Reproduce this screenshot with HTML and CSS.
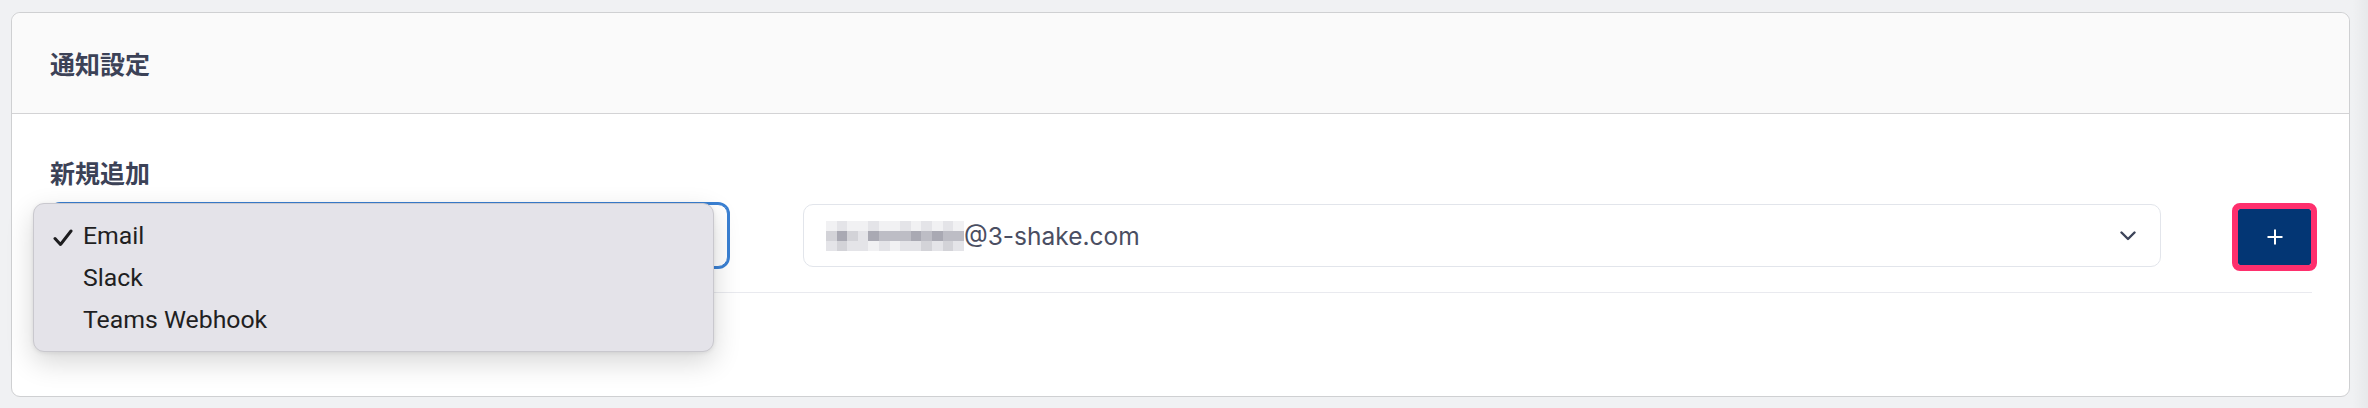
FILE: index.html
```html
<!DOCTYPE html>
<html lang="ja">
<head>
<meta charset="utf-8">
<title>通知設定</title>
<link rel="stylesheet" href="styles.css">
</head>
<body>
<div class="page">
  <section class="card">
    <header class="card-header">
      <h2 class="card-title">通知設定</h2>
    </header>
    <div class="card-body">
      <h3 class="section-label">新規追加</h3>
      <div class="add-row">
        <div class="type-select-wrap">
          <div class="select select-focused"></div>
          <div class="menu">
            <div class="menu-item"><svg class="check" viewBox="0 0 20 18" width="20" height="18"><path d="M2 9.5 L7.5 15.5 L18 2" fill="none" stroke="#1d1d1f" stroke-width="3" stroke-linecap="round" stroke-linejoin="round"/></svg><span>Email</span></div>
            <div class="menu-item"><span>Slack</span></div>
            <div class="menu-item"><span>Teams Webhook</span></div>
          </div>
        </div>
        <div class="select select-address">
          <div class="value">
            <div class="pixelated">
              <i class="p1"></i><i class="p2"></i><i class="p1"></i><i class="p1"></i><i class="p2"></i><i class="p1"></i><i class="p1"></i><i class="p2"></i><i class="p1"></i><i class="p2"></i><i class="p1"></i><i class="p2"></i><i class="p1"></i>
              <i class="p3"></i><i class="p5"></i><i class="p3"></i><i class="p2"></i><i class="p5"></i><i class="p4"></i><i class="p4"></i><i class="p4"></i><i class="p5"></i><i class="p4"></i><i class="p5"></i><i class="p4"></i><i class="p4"></i>
              <i class="p2"></i><i class="p3"></i><i class="p2"></i><i class="p2"></i><i class="p1"></i><i class="p2"></i><i class="p1"></i><i class="p2"></i><i class="p2"></i><i class="p3"></i><i class="p2"></i><i class="p3"></i><i class="p2"></i>
            </div>
            <span class="domain">@3-shake.com</span>
          </div>
          <svg class="chevron" viewBox="0 0 16 10" width="16" height="10"><path d="M1.5 1.5 L8 8 L14.5 1.5" fill="none" stroke="#3d4459" stroke-width="2.4" stroke-linecap="round" stroke-linejoin="round"/></svg>
        </div>
        <button class="add-btn" type="button"><svg viewBox="0 0 16 16" width="16" height="16"><path d="M8 0.5 V15.5 M0.5 8 H15.5" stroke="#ffffff" stroke-width="2"/></svg></button>
      </div>
      <div class="list-area"></div>
    </div>
  </section>
</div>
</body>
</html>
```

FILE: styles.css
```css
html, body {
  margin: 0;
  padding: 0;
}
body {
  background: #f0f1f3;
  font-family: Inter, "Noto Sans CJK JP", sans-serif;
  width: 2368px;
  height: 408px;
  overflow: hidden;
  position: relative;
}
body::after {
  content: "";
  position: absolute;
  top: 0;
  right: 0;
  width: 16px;
  height: 100%;
  background: linear-gradient(to right, rgba(0,0,0,0), rgba(0,0,0,0.035));
}
.page {
  padding: 12px 18px 11px 11px;
}
.card {
  background: #ffffff;
  border: 1px solid #cfd0d2;
  border-radius: 9px;
  overflow: visible;
}
.card-header {
  height: 100px;
  background: #fafafa;
  border-bottom: 1px solid #d3d3d5;
  border-radius: 9px 9px 0 0;
  display: flex;
  align-items: center;
  padding-left: 38px;
}
.card-title {
  margin: 0;
  font-family: "Noto Sans CJK JP", sans-serif;
  font-size: 25px;
  line-height: 36px;
  font-weight: 700;
  color: #3c4257;
}
.card-body {
  padding: 40px 37px 0 38px;
}
.section-label {
  margin: 0 0 14px 0;
  font-family: "Noto Sans CJK JP", sans-serif;
  font-size: 25px;
  line-height: 36px;
  font-weight: 700;
  color: #3c4257;
}
.add-row {
  display: flex;
  align-items: center;
  padding-bottom: 25px;
  border-bottom: 1px solid #e9eaef;
}
.type-select-wrap {
  position: relative;
  width: 678px;
  flex: none;
  margin-right: 75px;
}
.select {
  box-sizing: border-box;
  height: 63px;
  border: 1px solid #e2e5eb;
  border-radius: 10px;
  background: #ffffff;
}
.select-focused {
  border: 1px solid #3a80d3;
  box-shadow: 0 0 0 2px #3a80d3;
}
.select-address {
  flex: 1;
  display: flex;
  align-items: center;
  justify-content: space-between;
  padding: 0 24px 0 22px;
  margin-right: 77px;
}
.value {
  display: flex;
  align-items: center;
}
.pixelated {
  display: grid;
  grid-template-columns: repeat(13, 10.6px);
  grid-template-rows: repeat(3, 10px);
  width: 138px;
  height: 30px;
}
.pixelated i {
  display: block;
}
.p1 { background: #f1f1f3; }
.p2 { background: #e4e4e8; }
.p3 { background: #d3d3d8; }
.p4 { background: #bdbdc5; }
.p5 { background: #a9a9b3; }
.domain {
  font-family: Inter, sans-serif;
  font-size: 24.5px;
  line-height: 36px;
  color: #4a4e62;
}
.chevron {
  display: block;
}
.add-btn {
  flex: none;
  width: 73px;
  height: 56px;
  margin: 2px 1px 0 0;
  padding: 0;
  border: none;
  border-radius: 2px;
  background: #033674;
  outline: 6px solid #fe2f6d;
  display: flex;
  align-items: center;
  justify-content: center;
}
.add-btn svg {
  display: block;
}
.list-area {
  height: 103px;
}
.menu {
  position: absolute;
  left: -17px;
  top: -1px;
  width: 681px;
  box-sizing: border-box;
  padding: 11px 0 10px 0;
  background: #e4e3e9;
  border: 1px solid #c9c8ce;
  border-radius: 11px;
  box-shadow: 0 10px 28px rgba(0,0,0,0.16), 0 1px 4px rgba(0,0,0,0.08);
  z-index: 5;
}
.menu-item {
  position: relative;
  height: 42px;
  line-height: 42px;
  padding-left: 49px;
  font-family: Roboto, sans-serif;
  font-size: 24.8px;
  color: #1f1f22;
}
.check {
  position: absolute;
  left: 19px;
  top: 14px;
}
```
